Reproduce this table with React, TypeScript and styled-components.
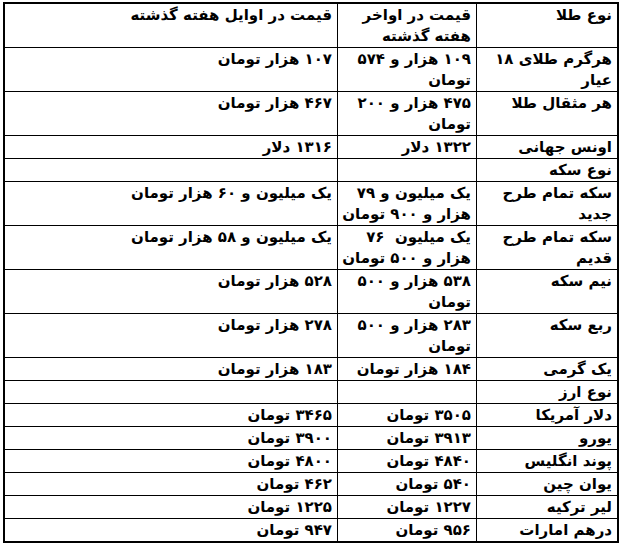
import React from "react";
import styled, { createGlobalStyle } from "styled-components";

const GlobalStyle = createGlobalStyle`
  html, body {
    margin: 0;
    padding: 0;
    background: #ffffff;
  }
  body {
    font-family: "DejaVu Sans", "Liberation Sans", sans-serif;
    color: #000000;
  }
`;

const Page = styled.div`
  padding: 2px 2px 0 3px;
`;

const Grid = styled.div`
  width: 612px;
  direction: rtl;
  display: grid;
  grid-template-columns: 140px 138px 1fr;
  gap: 1px;
  background: #000;
  border: 2px solid #000;
`;

const Cell = styled.div`
  background: #fff;
  padding: 1px 5px 0 4px;
  text-align: right;
  white-space: pre;
  overflow: hidden;
  font-size: 15px;
  font-weight: bold;
  line-height: 21px;
`;

type Row = [string, string, string];

const rows: Row[] = [
  ["نوع طلا", "قیمت در اواخر\nهفته گذشته", "قیمت در اوایل هفته گذشته"],
  ["هرگرم طلای ۱۸\nعیار", "۱۰۹ هزار و ۵۷۴\nتومان", "۱۰۷ هزار تومان"],
  ["هر مثقال طلا", "۴۷۵ هزار و ۲۰۰\nتومان", "۴۶۷ هزار تومان"],
  ["اونس جهانی", "۱۳۲۲ دلار", "۱۳۱۶ دلار"],
  ["نوع سکه", "", ""],
  ["سکه تمام طرح\nجدید", "یک میلیون و ۷۹\nهزار و ۹۰۰ تومان", "یک میلیون و ۶۰ هزار تومان"],
  ["سکه تمام طرح\nقدیم", "یک میلیون  ۷۶\nهزار و ۵۰۰ تومان", "یک میلیون و ۵۸ هزار تومان"],
  ["نیم سکه", "۵۳۸ هزار و ۵۰۰\nتومان", "۵۲۸ هزار تومان"],
  ["ربع سکه", "۲۸۳ هزار و ۵۰۰\nتومان", "۲۷۸ هزار تومان"],
  ["یک گرمی", "۱۸۴ هزار تومان", "۱۸۳ هزار تومان"],
  ["نوع ارز", "", ""],
  ["دلار آمریکا", "۳۵۰۵ تومان", "۳۴۶۵ تومان"],
  ["یورو", "۳۹۱۳ تومان", "۳۹۰۰ تومان"],
  ["پوند انگلیس", "۴۸۴۰ تومان", "۴۸۰۰ تومان"],
  ["یوان چین", "۵۴۰ تومان", "۴۶۲ تومان"],
  ["لیر ترکیه", "۱۲۲۷ تومان", "۱۲۲۵ تومان"],
  ["درهم امارات", "۹۵۶ تومان", "۹۴۷ تومان"],
];

export default function App() {
  return (
    <Page>
      <GlobalStyle />
      <Grid>
        {rows.map((row, i) =>
          row.map((text, j) => <Cell key={`${i}-${j}`}>{text}</Cell>)
        )}
      </Grid>
    </Page>
  );
}
